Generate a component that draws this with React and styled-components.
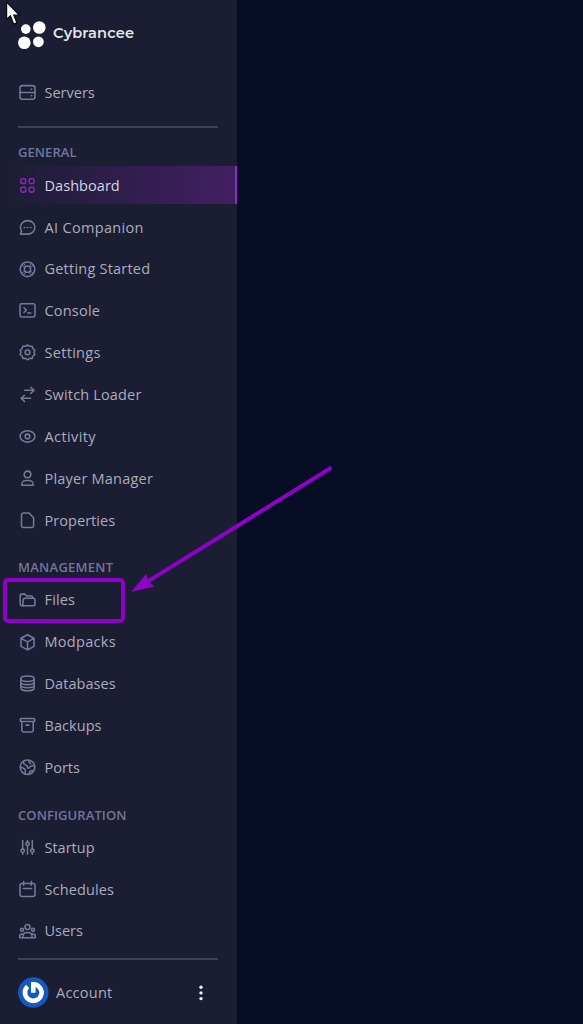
import React from 'react';
import styled, { createGlobalStyle } from 'styled-components';

const GlobalStyle = createGlobalStyle`
  body {
    margin: 0;
    background: #080d26;
    font-family: 'Open Sans', 'Noto Sans', sans-serif;
  }
`

const icons = {
  servers: (
    <>
      <rect x="2" y="2.6" width="15" height="13.6" rx="2.4" />
      <path d="M2 9.4h15M13.2 6.2h.6M13.2 12.8h.6" />
    </>
  ),
  dashboard: (
    <>
      <rect x="2.9" y="2.7" width="4.8" height="4.8" rx="1.5" />
      <rect x="11.2" y="2.7" width="4.8" height="4.8" rx="1.5" />
      <rect x="2.9" y="11.3" width="4.8" height="4.8" rx="1.5" />
      <rect x="11.2" y="11.3" width="4.8" height="4.8" rx="1.5" />
    </>
  ),
  chat: (
    <>
      <path d="M9.7 2.6C5.6 2.6 2.4 5.6 2.4 9.3c0 1.5.5 2.8 1.2 3.9L2.4 16.1h7.3c4 0 7.2-3 7.2-6.8S13.7 2.6 9.7 2.6Z" />
      <path d="M6.2 9.4h.5M9.3 9.4h.5M12.4 9.4h.5" />
    </>
  ),
  lifebuoy: (
    <>
      <circle cx="9.5" cy="9.3" r="7.3" />
      <rect x="6.5" y="6.3" width="6" height="6" rx="2.2" />
      <path d="M4.2 5.6l2.6 2M5.9 3.8l1.9 2.6M14.8 5.6l-2.6 2M13.1 3.8l-1.9 2.6M4.2 13l2.6-2M5.9 14.8l1.9-2.6M14.8 13l-2.6-2M13.1 14.8l-1.9-2.6" strokeWidth="1" />
    </>
  ),
  console: (
    <>
      <rect x="2" y="2.7" width="15" height="13.2" rx="1.6" />
      <path d="M6 6.7l2.4 2.4L6 11.5M9.8 12h3" />
    </>
  ),
  settings: (
    <>
      <path d="M9.5 1.8l2 1.5 2.7-.1.7 2.4 1.9 1.4-.8 2.3.8 2.3-1.9 1.4-.7 2.4-2.7-.1-2 1.5-2-1.5-2.7.1-.7-2.4-1.9-1.4.8-2.3-.8-2.3 1.9-1.4.7-2.4 2.7.1z" />
      <circle cx="9.5" cy="9.3" r="2.4" />
    </>
  ),
  switch: <path d="M6.6 5.3h9.3M12.8 2.2l3.2 3.1-3.2 3.1M12.6 13.3H3.2M6.4 10.2l-3.3 3.1 3.3 3.1" />,
  eye: (
    <>
      <ellipse cx="9.5" cy="9.4" rx="7.4" ry="5.7" />
      <circle cx="9.5" cy="9.4" r="2.3" />
    </>
  ),
  user: (
    <>
      <circle cx="9.5" cy="5.4" r="3.3" />
      <path d="M3.8 16.3v-.7c0-2.3 1.8-4.1 4-4.1h3.4c2.2 0 4 1.8 4 4.1v.7z" />
    </>
  ),
  file: <path d="M5.7 1.9h5.1l4.8 4.9v8c0 1-.8 1.7-1.7 1.7H5.2c-1 0-1.7-.8-1.7-1.7V3.9c0-1.1.9-2 2.2-2Z" />,
  folder: (
    <>
      <path d="M4.7 14.8H4c-1 0-1.8-.8-1.8-1.7V4.7c0-.9.7-1.6 1.6-1.6h3.1l1.9 1.9h4c1 0 1.8.8 1.8 1.7v.6" />
      <path d="M6.8 7.3h8.6c.9 0 1.6.7 1.6 1.6v4.3c0 .9-.7 1.6-1.6 1.6H4.7l.5-5.9c.1-.9.7-1.6 1.6-1.6Z" />
    </>
  ),
  box: <path d="M9.5 1.7l6.5 3.5v8.2l-6.5 3.5L3 13.4V5.2zM3 5.4l6.5 3.5L16 5.4M9.5 8.9v7.8" />,
  database: (
    <>
      <ellipse cx="9.5" cy="4.7" rx="6.7" ry="2.7" />
      <path d="M2.8 4.7v9.2c0 1.6 3 2.9 6.7 2.9s6.7-1.3 6.7-2.9V4.7M2.8 7.9c0 1.6 3 2.7 6.7 2.7s6.7-1.1 6.7-2.7M2.8 11c0 1.6 3 2.7 6.7 2.7s6.7-1.1 6.7-2.7" />
    </>
  ),
  archive: (
    <>
      <rect x="2.4" y="2.4" width="14.3" height="3.1" rx=".8" />
      <path d="M3.8 5.6v8.6c0 1 .7 1.7 1.7 1.7h8c1 0 1.7-.7 1.7-1.7V5.6M8 9.1h3" />
    </>
  ),
  globe: (
    <>
      <circle cx="9.5" cy="9.2" r="7.3" />
      <path d="M5.6 3.2c-.3 2 .4 3.6 2 3.7 1.7.1 1.7 1 1.8 2 .1 1.6 2 1.7 2.4.2.4-1.7 2.3-1.5 4.8-1.4M2.5 8.3c1.3 2 3.8 1.7 4.6 3 .6 1.1-.2 2.9.2 4.7M11.4 16.2c-.3-2.3.6-3.8 3.8-3.4M11.6 2.5c-.9 1.3-.4 2.6.9 2.9" />
    </>
  ),
  sliders: (
    <>
      <path d="M4.7 2.6v8.6M4.7 15v1.2M9.5 2.6v.7M9.5 7.3v8.9M14.3 2.6v8.6M14.3 15v1.2" />
      <circle cx="4.7" cy="12.8" r="1.7" />
      <circle cx="9.5" cy="5.8" r="1.7" />
      <circle cx="14.3" cy="12.8" r="1.7" />
    </>
  ),
  calendar: (
    <>
      <rect x="2" y="3.4" width="15" height="13" rx="1.8" />
      <path d="M5.6 1.5v3.8M13.4 1.5v3.8M5.4 8.4h8.2" />
    </>
  ),
  users: (
    <>
      <circle cx="9.5" cy="4.9" r="2.5" />
      <circle cx="4" cy="7.7" r="1.5" />
      <circle cx="15" cy="7.7" r="1.5" />
      <path d="M4.9 15.8v-1.4c0-2.4 2-3.9 4.6-3.9s4.6 1.5 4.6 3.9v1.4zM4.9 15.8H1.7v-1.7c0-1.3.8-2.1 2.2-2.1h1.5M14.1 15.8h3.2v-1.7c0-1.3-.8-2.1-2.2-2.1h-1.5" />
    </>
  ),
}

const sections = [
  {
    title: 'GENERAL',
    tracking: 0.08,
    items: [
      { icon: 'dashboard', label: 'Dashboard', active: true, tracking: 0.05 },
      { icon: 'chat', label: 'AI Companion', tracking: 0.33 },
      { icon: 'lifebuoy', label: 'Getting Started', tracking: 0.22 },
      { icon: 'console', label: 'Console', tracking: 0.2 },
      { icon: 'settings', label: 'Settings', tracking: 0.3 },
      { icon: 'switch', label: 'Switch Loader', tracking: 0.16 },
      { icon: 'eye', label: 'Activity', tracking: 0.4 },
      { icon: 'user', label: 'Player Manager', tracking: 0.22 },
      { icon: 'file', label: 'Properties', tracking: 0.05 },
    ],
  },
  {
    title: 'MANAGEMENT',
    tracking: 0.26,
    items: [
      { icon: 'folder', label: 'Files', tracking: 0.15 },
      { icon: 'box', label: 'Modpacks', tracking: 0.3 },
      { icon: 'database', label: 'Databases', tracking: 0.05 },
      { icon: 'archive', label: 'Backups', tracking: 0.05 },
      { icon: 'globe', label: 'Ports' },
    ],
  },
  {
    title: 'CONFIGURATION',
    tracking: 0.1,
    items: [
      { icon: 'sliders', label: 'Startup' },
      { icon: 'calendar', label: 'Schedules', tracking: 0.12 },
      { icon: 'users', label: 'Users' },
    ],
  },
]

function NavItem({ icon, label, active, tracking }) {
  return (
    <Item $active={active}>
      <Icon $active={active} viewBox="0 0 19 19">{icons[icon]}</Icon>
      <ItemText $tracking={tracking}>{label}</ItemText>
    </Item>
  );
}

function App() {
  return (
    <Page>
      <GlobalStyle />
      <Sidebar>
        <Brand>
          <Logo viewBox="0 0 28 29">
            <circle cx="7.8" cy="8.1" r="4.8" />
            <circle cx="21.3" cy="6.5" r="6.3" />
            <circle cx="6.3" cy="21.8" r="6.3" />
            <circle cx="20.4" cy="20.8" r="5.4" />
          </Logo>
          <BrandName>Cybrancee</BrandName>
        </Brand>

        <NavItem icon="servers" label="Servers" />
        <Divider $top="14.9px" />

        <Nav>
          {sections.map((section) => (
            <Section key={section.title}>
              <SectionTitle $tracking={section.tracking}>{section.title}</SectionTitle>
              <ItemList>
                {section.items.map((item) => (
                  <NavItem key={item.label} {...item} />
                ))}
              </ItemList>
            </Section>
          ))}
        </Nav>

        <Divider $top="8.2px" />
        <Account>
          <Avatar viewBox="0 0 31 31">
            <circle cx="15.3" cy="15.5" r="15.2" fill="#1559bd" />
            <path d="M9.6 9.4a8.3 8.3 0 1 0 5.7-2.2v8.6" fill="none" stroke="#fff" strokeWidth="4.6" />
          </Avatar>
          <AccountName>Account</AccountName>
          <Dots viewBox="0 0 6 18">
            <circle cx="3" cy="3.2" r="1.7" />
            <circle cx="3" cy="8.9" r="1.7" />
            <circle cx="3" cy="14.6" r="1.7" />
          </Dots>
        </Account>
      </Sidebar>

      <Highlight />
      <Arrow viewBox="0 0 583 1024">
        <path d="M331.5 467.5L145 583.2" stroke="#9000c8" strokeWidth="3.9" />
        <path d="M131.3 591.7L146.2 573.8L148 580.8L154.4 586.6Z" fill="#9000c8" />
      </Arrow>
      <Cursor viewBox="0 0 16 26">
        <path d="M1.6 2.2v17.2l3.8-3.5 3.3 8.2 3.2-1.3-3.2-7.6h5.6z" fill="#fff" stroke="#08080e" strokeWidth="1.2" />
      </Cursor>
    </Page>
  );
}

const Page = styled.div`
  position: relative;
  width: 583px;
  height: 1024px;
  overflow: hidden;
`

const Sidebar = styled.aside`
  width: 237px;
  height: 1024px;
  background: #1b1d33;
  display: flex;
  flex-direction: column;
`

const Brand = styled.div`
  display: flex;
  align-items: flex-start;
  height: 52.4px;
  padding: 21px 0 0 18px;
`

const Logo = styled.svg`
  width: 28px;
  height: 29px;
  fill: #fff;
`

const BrandName = styled.span`
  margin: 2px 0 0 7px;
  color: #e4e4ec;
  font-family: 'Montserrat', 'Open Sans', sans-serif;
  font-size: 14.6px;
  font-weight: 600;
  line-height: 20px;
  letter-spacing: 0.15px;
`

const Item = styled.div`
  box-sizing: border-box;
  flex: none;
  display: flex;
  align-items: center;
  height: 38px;
  padding-left: 18px;
  border-right: 2px solid ${props => props.$active ? '#9128c4' : 'transparent'};
  background: ${props => props.$active ? 'linear-gradient(90deg, #1b1d33 0%, #421f63 100%)' : 'none'};
  color: ${props => props.$active ? '#d5d5e0' : '#abacbd'};
`

const Icon = styled.svg`
  width: 19px;
  height: 19px;
  fill: none;
  stroke: ${props => props.$active ? '#8c26b8' : '#77789a'};
  stroke-width: 1.55;
  stroke-linecap: round;
  stroke-linejoin: round;
`

const ItemText = styled.span`
  margin-left: 7.5px;
  padding-top: 0.6px;
  font-size: 14.5px;
  line-height: 20px;
  letter-spacing: ${props => props.$tracking || 0}px;
  white-space: nowrap;
`

const Divider = styled.div`
  flex: none;
  width: 200px;
  height: 2px;
  margin: ${props => props.$top} 0 0 18px;
  background: #3e4058;
`

const Nav = styled.nav`
  display: flex;
  flex-direction: column;
  gap: 19.9px;
  padding-top: 16.2px;
`

const Section = styled.section`
  display: flex;
  flex-direction: column;
  gap: 5.9px;
`

const SectionTitle = styled.div`
  height: 16px;
  padding-left: 18px;
  color: #73759b;
  font-size: 13px;
  font-weight: 600;
  line-height: 16px;
  letter-spacing: ${props => props.$tracking || 0}px;
`

const ItemList = styled.div`
  display: flex;
  flex-direction: column;
  gap: 3.88px;
`

const Account = styled.div`
  display: flex;
  align-items: center;
  height: 31px;
  padding: 16.8px 33px 0 18px;
`

const Avatar = styled.svg`
  width: 31px;
  height: 31px;
`

const AccountName = styled.span`
  flex: 1;
  margin-left: 7px;
  padding-top: 0.6px;
  color: #abacbd;
  font-size: 14.5px;
  line-height: 20px;
  letter-spacing: 0.25px;
`

const Dots = styled.svg`
  width: 6px;
  height: 18px;
  fill: #f0f0f5;
`

/* annotations drawn over the panel */
const Highlight = styled.div`
  position: absolute;
  box-sizing: border-box;
  left: 3px;
  top: 578px;
  width: 122px;
  height: 45px;
  border: 4px solid #9000c8;
  border-radius: 5px;
`

const Arrow = styled.svg`
  position: absolute;
  left: 0;
  top: 0;
  width: 583px;
  height: 1024px;
`

const Cursor = styled.svg`
  position: absolute;
  left: 5px;
  top: 0;
  width: 16px;
  height: 26px;
`

export default App;
